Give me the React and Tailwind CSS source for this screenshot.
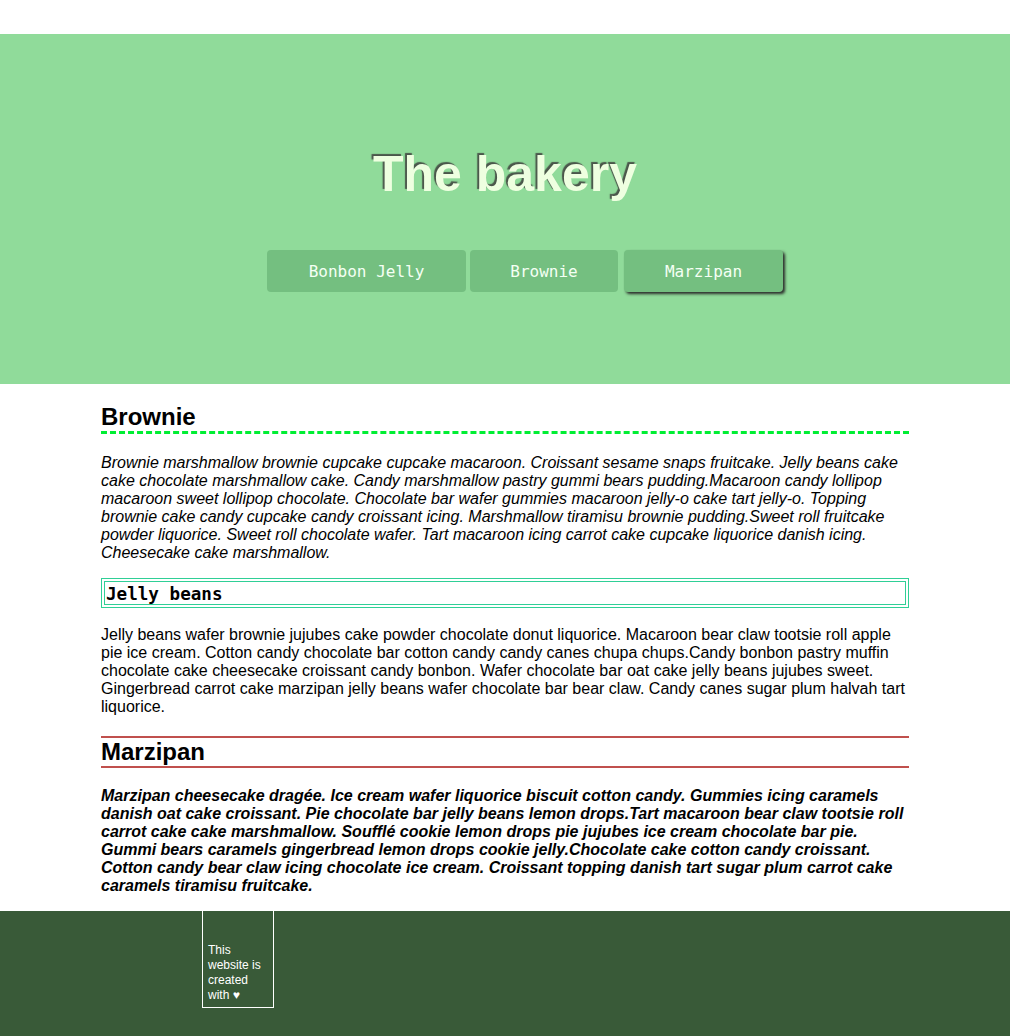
export default function App() {
  const sans = "font-['Liberation_Sans',Arial,sans-serif]";
  const btn =
    "h-[42px] px-[40px] pt-[2px] rounded-[4px] bg-[#74bf80] text-[#f4fff4] text-[16px] font-['DejaVu_Sans_Mono',monospace] flex items-center justify-center";
  return (
    <div className={`${sans} bg-white text-black`}>
      <header className="mt-[34px] bg-[#90db9a] pt-[111px] pb-[92px] flex flex-col items-center">
        <h1 className="text-[50px] leading-[58px] font-bold text-[#eeffe0] [text-shadow:-2px_-2px_1px_#4a564a]">
          The bakery
        </h1>
        <nav className="mt-[47px] pl-[40px] flex items-center">
          <a className={`${btn} w-[199px]`}>Bonbon Jelly</a>
          <a className={`${btn} w-[148px] ml-[4px]`}>Brownie</a>
          <a className={`${btn} w-[159px] ml-[6px] shadow-[2px_2px_3px_#2a2a2a]`}>Marzipan</a>
        </nav>
      </header>

      <main className="w-[808px] mx-auto pt-[19px] pb-[16px]">
        <h2 className="text-[24px] leading-[28px] font-bold border-b-[3px] border-dashed border-[#00ee33]">
          Brownie
        </h2>
        <p className="mt-[20px] text-[16px] leading-[18px] italic">
          Brownie marshmallow brownie cupcake cupcake macaroon. Croissant sesame snaps fruitcake. Jelly beans cake cake chocolate marshmallow cake. Candy marshmallow pastry gummi bears pudding.Macaroon candy lollipop macaroon sweet lollipop chocolate. Chocolate bar wafer gummies macaroon jelly-o cake tart jelly-o. Topping brownie cake candy cupcake candy croissant icing. Marshmallow tiramisu brownie pudding.Sweet roll fruitcake powder liquorice. Sweet roll chocolate wafer. Tart macaroon icing carrot cake cupcake liquorice danish icing. Cheesecake cake marshmallow.
        </p>
        <h3 className="mt-[16px] h-[30px] border-[4px] border-double border-[#2fcf96] px-[1px] pt-[2px] flex items-center text-[17.6px] font-bold font-['DejaVu_Sans_Mono',monospace]">
          Jelly beans
        </h3>
        <p className="mt-[18px] text-[16px] leading-[18px]">
          Jelly beans wafer brownie jujubes cake powder chocolate donut liquorice. Macaroon bear claw tootsie roll apple pie ice cream. Cotton candy chocolate bar cotton candy candy canes chupa chups.Candy bonbon pastry muffin chocolate cake cheesecake croissant candy bonbon. Wafer chocolate bar oat cake jelly beans jujubes sweet. Gingerbread carrot cake marzipan jelly beans wafer chocolate bar bear claw. Candy canes sugar plum halvah tart liquorice.
        </p>
        <h2 className="mt-[20px] text-[24px] leading-[28px] font-bold border-y-2 border-[#c0504d]">
          Marzipan
        </h2>
        <p className="mt-[19px] text-[16px] leading-[18px] italic font-bold">
          Marzipan cheesecake dragée. Ice cream wafer liquorice biscuit cotton candy. Gummies icing caramels danish oat cake croissant. Pie chocolate bar jelly beans lemon drops.Tart macaroon bear claw tootsie roll carrot cake cake marshmallow. Soufflé cookie lemon drops pie jujubes ice cream chocolate bar pie. Gummi bears caramels gingerbread lemon drops cookie jelly.Chocolate cake cotton candy croissant. Cotton candy bear claw icing chocolate ice cream. Croissant topping danish tart sugar plum carrot cake caramels tiramisu fruitcake.
        </p>
      </main>

      <footer className="bg-[#395a38] h-[125px]">
        <div className="ml-[20%] w-[72px] h-[97px] border border-white border-t-0 px-[5px] pt-[32px] text-white text-[12px] leading-[15px]">
          This website is created with ♥
        </div>
      </footer>
    </div>
  );
}
